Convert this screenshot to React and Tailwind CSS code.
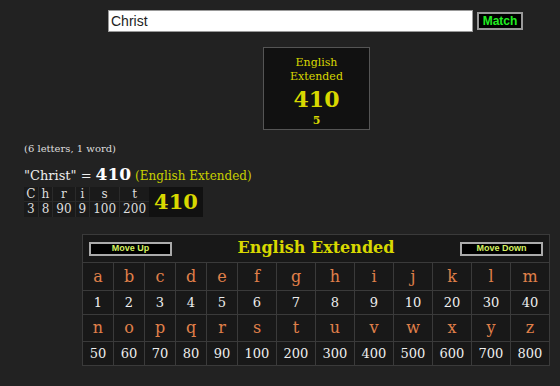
import React from "react";

const serif = { fontFamily: '"DejaVu Serif", serif' };

const row1 = ["a", "b", "c", "d", "e", "f", "g", "h", "i", "j", "k", "l", "m"];
const val1 = [1, 2, 3, 4, 5, 6, 7, 8, 9, 10, 20, 30, 40];
const row2 = ["n", "o", "p", "q", "r", "s", "t", "u", "v", "w", "x", "y", "z"];
const val2 = [50, 60, 70, 80, 90, 100, 200, 300, 400, 500, 600, 700, 800];

const word = [
  ["C", 3],
  ["h", 8],
  ["r", 90],
  ["i", 9],
  ["s", 100],
  ["t", 200],
];

function SmallButton({ children }) {
  return (
    <button className="w-[83px] h-[14px] bg-black border-2 border-[#aaa] text-[9px] leading-none font-bold text-[#d4f060] font-['Liberation_Sans',sans-serif]">
      {children}
    </button>
  );
}

export default function App() {
  return (
    <div className="w-[560px] h-[386px] bg-[#222] overflow-hidden" style={serif}>
      <div className="flex items-start pl-[108px] pt-[10px] gap-[4px]">
        <input
          defaultValue="Christ"
          className="w-[365px] h-[22px] bg-white border border-[#999] px-[2px] text-[14px] text-[#222] font-['Liberation_Sans',sans-serif] outline-none"
        />
        <button className="mt-[2px] w-[46px] h-[18px] bg-black border-2 border-[#999] text-[#22ee22] text-[12px] font-bold leading-none font-['Liberation_Sans',sans-serif]">
          Match
        </button>
      </div>

      <div className="ml-[263px] mt-[15px] w-[107px] h-[83px] bg-[#111] border border-[#555] flex flex-col items-center pt-[8px] text-[#d8d800]">
        <div className="text-[11px] leading-[14px] text-center">English<br />Extended</div>
        <div className="mt-[2px] text-[22px] font-bold leading-[26px]">410</div>
        <div className="text-[11px] font-bold leading-[18px]">5</div>
      </div>

      <div className="ml-[24px] mt-[13px] text-[10px] text-[#ddd] leading-[12px]">(6 letters, 1 word)</div>

      <div className="ml-[24px] mt-[9px] flex items-baseline gap-[4px] leading-[20px]">
        <span className="text-[13px] text-[#eee]">"Christ" =</span>
        <span className="text-[17px] font-bold text-white">410</span>
        <span className="text-[12px] text-[#c8d000]">(English Extended)</span>
      </div>

      <div className="ml-[24px] mt-[1px] flex w-[179px] h-[30px] bg-[#111]">
        <div className="flex bg-[#1a1a1a]">
          {word.map(([l, v]) => (
            <div key={l} className="flex flex-col items-center border-r border-[#2a2a2a] last:border-r-0 text-[12px] leading-[14px] text-[#ddd]">
              <span className="border-b border-[#2a2a2a] w-full text-center">{l}</span>
              <span className="px-[3px]">{v}</span>
            </div>
          ))}
        </div>
        <div className="flex-1 flex items-center justify-center text-[21px] font-bold text-[#d8d800]">410</div>
      </div>

      <div className="ml-[82px] mt-[17px] w-[468px] grid grid-cols-[repeat(5,30px)_repeat(8,38px)] gap-px bg-[#3a3a3a] p-px">
        <div className="col-span-13 h-[27px] bg-[#181818] flex items-center justify-between px-[6px]">
          <SmallButton>Move Up</SmallButton>
          <span className="text-[16px] font-bold text-[#d8d800] -mt-[2px]">English Extended</span>
          <SmallButton>Move Down</SmallButton>
        </div>
        {row1.map((l) => (
          <div key={l} className="h-[27px] bg-[#181818] flex items-center justify-center text-[16px] text-[#e0804a]">{l}</div>
        ))}
        {val1.map((v) => (
          <div key={v} className="h-[23px] bg-[#181818] flex items-center justify-center text-[13px] text-[#eee]">{v}</div>
        ))}
        {row2.map((l) => (
          <div key={l} className="h-[26px] bg-[#181818] flex items-center justify-center text-[16px] text-[#e0804a]">{l}</div>
        ))}
        {val2.map((v) => (
          <div key={v} className="h-[23px] bg-[#181818] flex items-center justify-center text-[13px] text-[#eee]">{v}</div>
        ))}
      </div>
    </div>
  );
}
